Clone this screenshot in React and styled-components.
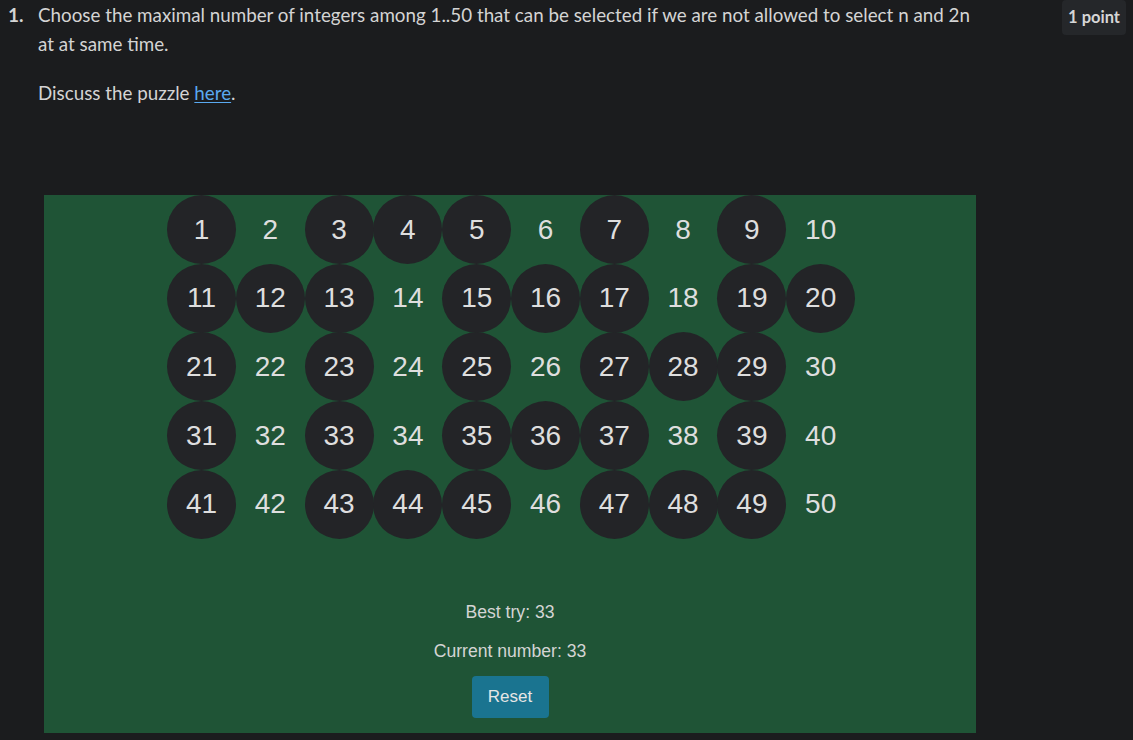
import React, { useState } from 'react';
import styled, { createGlobalStyle } from 'styled-components';

const GlobalStyle = createGlobalStyle`
  html, body {
    margin: 0;
    padding: 0;
    background: #1b1c1e;
    color: #d4d4d4;
    font-family: Lato, "Noto Sans", sans-serif;
  }
`;

const INITIAL = [1, 3, 4, 5, 7, 9, 11, 12, 13, 15, 16, 17, 19, 20, 21, 23, 25, 27, 28, 29,
  31, 33, 35, 36, 37, 39, 41, 43, 44, 45, 47, 48, 49];

export default function App() {
    const [selected, setSelected] = useState(new Set(INITIAL));
    const [best, setBest] = useState(33);

    const toggle = (n) => {
        const next = new Set(selected);
        if (next.has(n)) {
            next.delete(n);
        } else {
            if (next.has(2 * n) || (n % 2 === 0 && next.has(n / 2))) return;
            next.add(n);
        }
        setSelected(next);
        if (next.size > best) setBest(next.size);
    };

    const numbers = Array.from({length: 50}, (_, i) => i + 1);

  return (
    <>
      <GlobalStyle />
      <Page>
          <Question>
              <Index>1.</Index>
              <Body>
                  <p>Choose the maximal number of integers among 1..50 that can be selected if we are not allowed to select n and 2n at at same time.</p>
                  <p>Discuss the puzzle <a href="#">here</a>.</p>
              </Body>
              <Points>1 point</Points>
          </Question>
          <Board>
              <Grid>
                  {numbers.map((n) => (
                      <Cell key={n} $on={selected.has(n)} onClick={() => toggle(n)}>{n}</Cell>
                  ))}
              </Grid>
              <Info $first>Best try: {best}</Info>
              <Info>Current number: {selected.size}</Info>
              <ResetButton onClick={() => setSelected(new Set())}>Reset</ResetButton>
          </Board>
      </Page>
    </>
  );
}

const Page = styled.div`
    width: 1133px;
    height: 740px;
    overflow: hidden;
`;

const Question = styled.div`
    display: grid;
    grid-template-columns: 30px 1fr auto;
    padding: 0 7px 0 8px;
`;

const Index = styled.div`
    font-weight: 700;
    font-size: 19px;
    line-height: 30px;
    color: #d4d4d4;
`;

const Body = styled.div`
    font-size: 18.8px;
    line-height: 29px;
    color: #d4d4d4;
    padding-right: 88px;
    p {
        margin: 0 0 20px;
    }
    a {
        color: #5aa9f0;
        text-decoration: underline;
        text-underline-offset: 2px;
    }
`;

const Points = styled.div`
    align-self: start;
    background: #25272a;
    border-radius: 4px;
    padding: 7px 6px 8px;
    font-size: 16.5px;
    line-height: 20px;
    font-weight: 700;
    color: #d6d6d6;
`;

const Board = styled.div`
    margin: 68px 0 0 44px;
    width: 932px;
    height: 538px;
    background: #1f5436;
    display: flex;
    flex-direction: column;
    align-items: center;
    font-family: "Liberation Sans", Arial, sans-serif;
`;

const Grid = styled.div`
    display: grid;
    grid-template-columns: repeat(10, 68.8px);
    grid-auto-rows: 68.7px;
    margin-left: 2px;
`;

const Cell = styled.div`
    width: 69px;
    height: 69px;
    border-radius: 50%;
    background: ${(p) => (p.$on ? '#232427' : 'transparent')};
    color: #dedede;
    font-size: 28px;
    display: flex;
    align-items: center;
    justify-content: center;
    cursor: pointer;
    user-select: none;
`;

const Info = styled.div`
    font-size: 17.6px;
    color: #d4d4d4;
    margin-top: ${(p) => (p.$first ? '64px' : '19px')};
    line-height: 20px;
`;

const ResetButton = styled.button`
    margin-top: 15px;
    width: 77px;
    height: 42px;
    border: none;
    border-radius: 4px;
    background: #1a7490;
    color: #e6e6e6;
    font-family: "Liberation Sans", Arial, sans-serif;
    font-size: 17px;
    cursor: pointer;
`;
